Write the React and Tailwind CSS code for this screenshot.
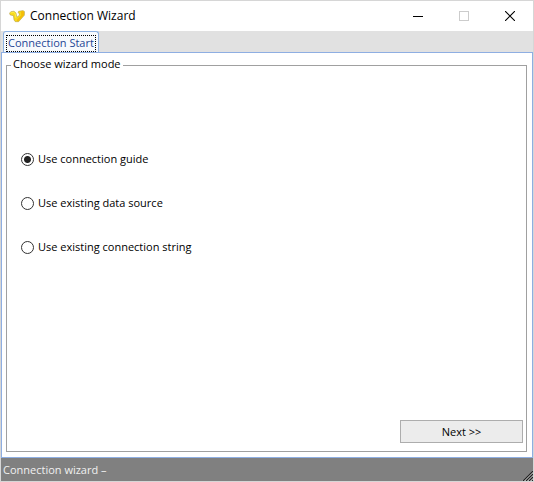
import { useState } from "react";

const MODES = [
  { id: "guide", label: "Use connection guide" },
  { id: "source", label: "Use existing data source" },
  { id: "string", label: "Use existing connection string" },
];

function Logo() {
  return (
    <svg width="16" height="13" viewBox="0 0 16 13" className="shrink-0" aria-hidden="true">
      <path d="M.5 3.2 1.8 1.7 5 1.2 7 3l.9 4.2L10.6 5 10 3 9 2.6l.6-1.3L14 .6l1.5 1-.1 3.6L9.6 11.7H6.3L5 10 4.4 5.7 1.2 5z" fill="#f7d91c" stroke="#a8954a" strokeWidth=".5" />
      <path d="M1.6 2.9 4.9 2.3 6.3 4l.7 4" fill="none" stroke="#fff04a" strokeWidth=".9" />
      <path d="m12 1.6.2 3.8L7.8 10l.3 1.2h1.2L15 5V2l-1.2-.9z" fill="#f4bd0a" />
    </svg>
  );
}

function TitleBar() {
  return (
    <header className="flex h-[30px] items-center bg-white pl-2">
      <Logo />
      <h1 className="ml-[5px] flex-1 text-[12px] leading-4 text-black">Connection Wizard</h1>
      <button type="button" aria-label="Minimize" className="flex h-full w-[46px] items-center justify-center">
        <svg width="10" height="10" shapeRendering="crispEdges"><path d="M0 5.5h10" stroke="#000" /></svg>
      </button>
      <button type="button" aria-label="Maximize" disabled className="flex h-full w-[46px] items-center justify-center">
        <svg width="10" height="10" shapeRendering="crispEdges"><path d="M.5.5h9v9h-9z" fill="none" stroke="#ccc" /></svg>
      </button>
      <button type="button" aria-label="Close" className="flex h-full w-[46px] items-center justify-center">
        <svg width="10" height="10"><path d="m0 0 10 10M10 0 0 10" stroke="#000" strokeWidth="1.1" /></svg>
      </button>
    </header>
  );
}

function Grip() {
  return (
    <svg width="11" height="11" viewBox="0 0 11 11" className="self-end" aria-hidden="true">
      <path d="M0 11 11 0v11z" fill="#d0d0d0" />
      <path d="M1 11 11 1M4 11l7-7M7 11l4-4M10 11l1-1" stroke="#222" strokeWidth="1.3" />
    </svg>
  );
}

export default function App() {
  const [mode, setMode] = useState("guide");
  return (
    <div className="flex min-h-screen flex-col border border-[#d6d6d6] bg-[#e1e1e1] font-['Open_Sans','Noto_Sans',sans-serif] text-[11px] leading-4 text-black">
      <TitleBar />
      <div role="tablist" className="flex h-[21px] items-end pl-0.5">
        <button
          type="button"
          role="tab"
          aria-selected="true"
          className="-mb-px flex h-[22px] rounded-t-[3px] border border-b-0 border-[#8db2e3] bg-[#f7fafd] px-0.5 pt-[3px] text-[#1f4795]"
        >
          <span className="h-[17px] border border-dotted border-black px-px leading-[14px]">Connection Start</span>
        </button>
      </div>
      <main className="flex flex-1 flex-col border border-[#8eaee2] bg-white pt-1 pr-[5px] pb-[5px] pl-1">
        <fieldset className="flex flex-1 flex-col border border-[#a0a0a0] pr-[3px] pb-2 pl-3.5">
          <legend className="-ml-2.5 h-4 px-0.5 leading-[14px]">Choose wizard mode</legend>
          <div className="flex flex-col gap-7 pt-[78px] pb-[165px]">
            {MODES.map((m) => (
              <label key={m.id} className="flex items-center gap-1">
                <input
                  type="radio"
                  name="mode"
                  value={m.id}
                  checked={mode === m.id}
                  onChange={() => setMode(m.id)}
                  className="size-[13px] appearance-none rounded-full border border-[#333] bg-white checked:bg-[radial-gradient(circle,#222_3px,white_4px)]"
                />
                {m.label}
              </label>
            ))}
          </div>
          <button type="button" className="h-[23px] w-[123px] self-end border border-[#adadad] bg-[#ececec]">
            Next &gt;&gt;
          </button>
        </fieldset>
      </main>
      <footer className="flex h-[23px] items-center justify-between bg-[#808080] pl-0.5 text-[#f0f0f0]">
        <span>Connection wizard –</span>
        <Grip />
      </footer>
    </div>
  );
}
